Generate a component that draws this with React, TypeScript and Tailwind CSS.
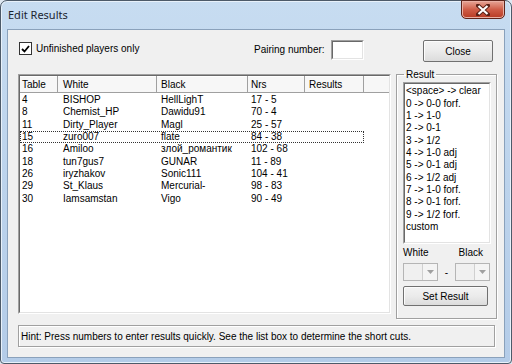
import React from 'react';

const rows = [
    { t: '4', w: 'BISHOP', b: 'HellLighT', n: '17 - 5' },
    { t: '8', w: 'Chemist_HP', b: 'Dawidu91', n: '70 - 4' },
    { t: '11', w: 'Dirty_Player', b: 'Magl', n: '25 - 57' },
    { t: '15', w: 'zuro007', b: 'flate', n: '84 - 38', focus: true },
    { t: '16', w: 'Amiloo', b: 'злой_романтик', n: '102 - 68' },
    { t: '18', w: 'tun7gus7', b: 'GUNAR', n: '11 - 89' },
    { t: '26', w: 'iryzhakov', b: 'Sonic111', n: '104 - 41' },
    { t: '29', w: 'St_Klaus', b: 'Mercurial-', n: '98 - 83' },
    { t: '30', w: 'Iamsamstan', b: 'Vigo', n: '90 - 49' },
];

const shortcuts = [
    '<space> -> clear',
    '0 -> 0-0 forf.',
    '1 -> 1-0',
    '2 -> 0-1',
    '3 -> 1/2',
    '4 -> 1-0 adj',
    '5 -> 0-1 adj',
    '6 -> 1/2 adj',
    '7 -> 1-0 forf.',
    '8 -> 0-1 forf.',
    '9 -> 1/2 forf.',
    'custom',
];

// classic sunken 3d edge
function Sunken({ className, children }: { className?: string; children?: React.ReactNode }) {
    return (
        <div className={`border border-t-[#a0a0a0] border-l-[#a0a0a0] border-b-white border-r-white ${className ?? ''}`}>
            <div className="w-full h-full border border-t-[#696969] border-l-[#696969] border-b-[#e3e3e3] border-r-[#e3e3e3] bg-white overflow-hidden">
                {children}
            </div>
        </div>
    );
}

function Btn({ label, className }: { label: string; className?: string }) {
    return (
        <div className={`border border-[#707070] rounded-[2px] bg-gradient-to-b from-[#f3f3f3] via-[#ebebeb] to-[#dcdcdc] flex items-center justify-center shadow-[inset_1px_1px_0_#fcfcfc] ${className ?? ''}`}>
            {label}
        </div>
    );
}

function Combo() {
    return (
        <div className="w-[35px] h-[18px] border border-[#b5b5b5] bg-[#f0f0f0] flex justify-end">
            <div className="w-[15px] h-full border-l border-[#d0d0d0] bg-[#f4f4f4] flex items-center justify-center">
                <svg width="7" height="4" viewBox="0 0 7 4"><path d="M0 0h7L3.5 4z" fill="#a0a0a0" /></svg>
            </div>
        </div>
    );
}

export default function App() {
    return (
        <div className="w-[512px] h-[364px] overflow-hidden bg-[#dfe8f2] text-[10px] text-black" style={{ fontFamily: '"Liberation Sans", Arial, sans-serif' }}>
            <div className="w-full h-full flex flex-col rounded-t-[7px] rounded-b-[4px] border border-[#4d5a69] bg-gradient-to-b from-[#c7dcf1] via-[#bcd3ec] to-[#b4cce8] shadow-[inset_0_0_0_1px_#e8f1fa]">
                {/* title bar */}
                <div className="h-[28px] flex items-start justify-between pl-[7px] pr-[6px]">
                    <div className="mt-[6px] text-[11px] text-[#1b2430]" style={{ fontFamily: '"Noto Sans", sans-serif' }}>Edit Results</div>
                    <div className="w-[44px] h-[19px] -mt-[1px] rounded-b-[5px] border border-[#5e241b] bg-gradient-to-b from-[#e6a597] via-[#cf5d48] to-[#b73a23] flex items-center justify-center shadow-[inset_0_0_0_1px_#eab1a5]">
                        <svg width="14" height="12" viewBox="0 0 14 12">
                            <path d="M2 1.5L12 10.5M12 1.5L2 10.5" stroke="#5a2117" strokeWidth="4" strokeLinecap="square" />
                            <path d="M2.5 2L11.5 10M11.5 2L2.5 10" stroke="#ffffff" strokeWidth="2.2" />
                        </svg>
                    </div>
                </div>

                {/* client area */}
                <div className="mx-[6px] h-[329px] border border-[#8aa1bb] bg-[#f0f0f0] flex flex-col pl-[10px]">
                    {/* top row */}
                    <div className="h-[38px] flex items-start pt-[10px]">
                        <div className="w-[235px] flex items-center gap-[4px] ml-[1px] mt-[1px]">
                            <div className="w-[13px] h-[13px] border border-[#333333] bg-white flex items-center justify-center">
                                <svg width="9" height="8" viewBox="0 0 9 8"><path d="M1 4l2.5 2.5L8 1" stroke="#000" strokeWidth="1.8" fill="none" /></svg>
                            </div>
                            <span>Unfinished players only</span>
                        </div>
                        <div className="w-[77px] mt-[2px]">Pairing number:</div>
                        <Sunken className="w-[33px] h-[20px]" />
                        <Btn label="Close" className="w-[70px] h-[22px] ml-[59px]" />
                    </div>

                    {/* main row */}
                    <div className="h-[253px] flex items-start">
                        {/* list view */}
                        <Sunken className="w-[373px] h-[240px] mt-[6px]">
                            <div className="h-[17px] flex border-b border-[#a0a0a0] bg-[#f7f7f7] shadow-[inset_0_1px_0_#ffffff]">
                                <div className="w-[38px] pl-[2px] flex items-center border-r border-[#a0a0a0]">Table</div>
                                <div className="w-[99px] pl-[5px] flex items-center border-r border-[#a0a0a0]">White</div>
                                <div className="w-[91px] pl-[4px] flex items-center border-r border-[#a0a0a0]">Black</div>
                                <div className="w-[57px] pl-[3px] flex items-center border-r border-[#a0a0a0]">Nrs</div>
                                <div className="w-[59px] pl-[4px] flex items-center border-r border-[#a0a0a0]">Results</div>
                                <div className="flex-1" />
                            </div>
                            <div className="pt-[1px]">
                                {rows.map((r) => (
                                    <div key={r.t} className={`h-[12.3px] w-[344px] flex items-center leading-none ${r.focus ? 'outline outline-1 outline-dotted outline-[#333] -outline-offset-1' : ''}`}>
                                        <div className="w-[38px] pl-[2px]">{r.t}</div>
                                        <div className="w-[99px] pl-[5px]">{r.w}</div>
                                        <div className="w-[91px] pl-[4px]">{r.b}</div>
                                        <div className="w-[57px] pl-[3px]">{r.n}</div>
                                        <div className="flex-1" />
                                    </div>
                                ))}
                            </div>
                        </Sunken>

                        {/* result group */}
                        <fieldset className="ml-[5px] mt-[1px] w-[101px] h-[250px] border border-[#a0a0a0] shadow-[inset_1px_1px_0_#ffffff,1px_1px_0_#ffffff] pl-[6px] pr-[5px]">
                            <legend className="ml-[1px] px-[2px] leading-[11px]">Result</legend>
                            <Sunken className="w-[88px] h-[162px] mt-[2px]">
                                <div className="pt-[1px] pl-[1px]">
                                    {shortcuts.map((s) => (
                                        <div key={s} className="h-[12.36px] flex items-center leading-none whitespace-nowrap">{s}</div>
                                    ))}
                                </div>
                            </Sunken>
                            <div className="flex justify-between mt-[2px] h-[13px] items-center pr-[8px]">
                                <span>White</span>
                                <span>Black</span>
                            </div>
                            <div className="flex items-center mt-[4px]">
                                <Combo />
                                <span className="w-[17px] text-center">-</span>
                                <Combo />
                            </div>
                            <Btn label="Set Result" className="w-[85px] h-[20px] mt-[5px] border-[#3c3c3c]" />
                        </fieldset>
                    </div>

                    {/* hint */}
                    <div className="w-[477px] h-[22px] mt-[4px] border border-[#a0a0a0] shadow-[inset_1px_1px_0_#ffffff,1px_1px_0_#ffffff] flex items-center pl-[2px]">
                        Hint: Press numbers to enter results quickly. See the list box to determine the short cuts.
                    </div>
                </div>
            </div>
        </div>
    );
}
